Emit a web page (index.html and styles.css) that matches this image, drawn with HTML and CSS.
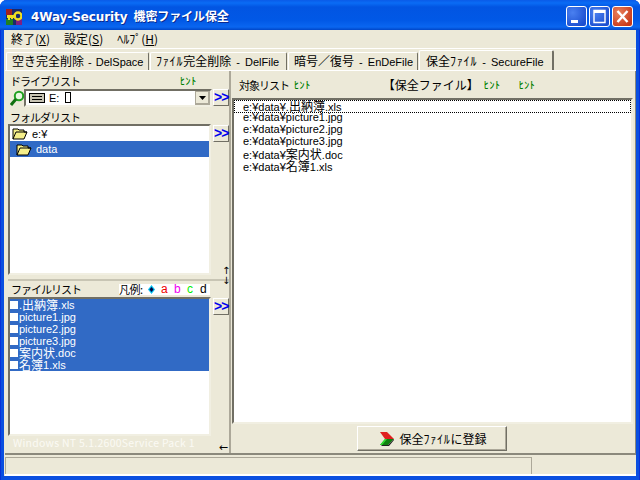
FILE: index.html
```html
<!DOCTYPE html>
<html lang="ja">
<head>
<meta charset="utf-8">
<title>4Way-Security</title>
<link rel="stylesheet" href="styles.css">
</head>
<body>
<div class="window">
  <header class="titlebar">
    <svg class="appicon" width="16" height="16" viewBox="0 0 16 16">
      <rect width="16" height="16" fill="#1a2a6a"/>
      <rect x="0" y="0" width="6" height="6" fill="#a02020"/>
      <rect x="0" y="10" width="7" height="6" fill="#208020"/>
      <rect x="10" y="10" width="6" height="6" fill="#802080"/>
      <rect x="1" y="6" width="9" height="3" fill="#f0e020"/>
      <circle cx="12" cy="7" r="3.500" fill="none" stroke="#f0e020" stroke-width="2.400"/>
      <rect x="2" y="8" width="2" height="3" fill="#f0e020"/>
      <rect x="5" y="8" width="2" height="2" fill="#f0e020"/>
    </svg>
    <span class="title">4Way-Security <span class="title-cj">機密ファイル保全</span></span>
    <div class="caption-buttons">
      <div class="capbtn"><svg width="19" height="19" viewBox="0 0 19 19"><rect x="4" y="13" width="7" height="3" fill="#fff"/></svg></div>
      <div class="capbtn"><svg width="19" height="19" viewBox="0 0 19 19"><path d="M4 3.500h11v12h-11z" fill="none" stroke="#fff" stroke-width="1.400"/><rect x="4" y="3" width="11" height="3" fill="#fff"/></svg></div>
      <div class="capbtn close"><svg width="19" height="19" viewBox="0 0 19 19"><path d="M4.500 4l10 11M14.500 4l-10 11" stroke="#fff" stroke-width="2.400"/></svg></div>
    </div>
  </header>
  <div class="client">
    <nav class="menu">
      <span>終了(<u>X</u>)</span><span>設定(<u>S</u>)</span><span>ﾍﾙﾌﾟ(<u>H</u>)</span>
    </nav>
    <div class="tabs">
      <div class="tab t1"><span class="cj">空き完全削除</span> - DelSpace</div>
      <div class="tab t2"><span class="hw">ﾌｧｲﾙ</span><span class="cj">完全削除</span> - DelFile</div>
      <div class="tab t3"><span class="cj">暗号／復号</span> - EnDeFile</div>
      <div class="tab active"><span class="cj">保全</span><span class="hw">ﾌｧｲﾙ</span> - SecureFile</div>
    </div>
    <main class="page">
      <section class="left">
        <div class="label-row drive-label"><span class="kana-label">ドライブリスト</span><span class="hint">ﾋﾝﾄ</span></div>
        <div class="drive-row">
          <svg class="lens" width="14" height="17" viewBox="0 0 14 17"><circle cx="9" cy="6" r="4.200" fill="#e8f8e0" stroke="#20a020" stroke-width="2"/><path d="M6 9l-5 6" stroke="#107010" stroke-width="3"/></svg>
          <div class="combo">
            <svg class="hdd" width="16" height="10" viewBox="0 0 16 10"><rect x=".5" y=".5" width="15" height="9" fill="#c8c4b4" stroke="#000"/><rect x="3" y="3" width="10" height="1" fill="#000"/><rect x="3" y="6" width="10" height="1" fill="#000"/></svg>
            <span class="combo-text">E: <span class="tofu"></span></span>
            <div class="combo-arrow"><svg width="7" height="4" viewBox="0 0 7 4"><path d="M0 0h7L3.500 4z" fill="#000"/></svg></div>
          </div>
          <div class="go">&gt;&gt;</div>
        </div>
        <div class="label-row folder-label"><span class="kana-label">フォルダリスト</span></div>
        <div class="list-row folder-row">
          <div class="listbox folders">
            <div class="folder">
              <svg width="16" height="13" viewBox="0 0 16 13"><path d="M1 2h5l1 1h5v2h3l-3 7H1z" fill="#f5ef8a" stroke="#000"/><path d="M1 12l3-7h11" fill="none" stroke="#000"/></svg>
              <span>e:¥</span>
            </div>
            <div class="folder sub selected">
              <svg width="16" height="13" viewBox="0 0 16 13"><path d="M1 2h5l1 1h5v2h3l-3 7H1z" fill="#f5ef8a" stroke="#000"/><path d="M1 12l3-7h11" fill="none" stroke="#000"/></svg>
              <span>data</span>
            </div>
          </div>
          <div class="go lower">&gt;&gt;</div>
        </div>
        <div class="splitter-row"><span class="updown">↑<br>↓</span></div>
        <div class="file-head">
          <span class="kana-label">ファイルリスト</span>
          <div class="legend"><span class="legend-title">凡例:</span><svg class="k-diamond" width="7" height="9" viewBox="0 0 7 9"><path d="M3.500 0l3.500 4.500-3.500 4.500-3.500-4.500z" fill="#00c0f0"/><path d="M3.500 2l2 2.500-2 2.500-2-2.500z" fill="#000040"/></svg><span class="k k-a">a</span><span class="k k-b">b</span><span class="k k-c">c</span><span class="k k-d">d</span></div>
        </div>
        <div class="list-row file-row">
          <div class="listbox files">
            <ul class="file-items">
              <li><i></i>.<span class="cj">出納簿</span>.xls</li>
              <li><i></i>picture1.jpg</li>
              <li><i></i>picture2.jpg</li>
              <li><i></i>picture3.jpg</li>
              <li><i></i><span class="cj">案内状</span>.doc</li>
              <li><i></i><span class="cj">名簿</span>1.xls</li>
            </ul>
          </div>
          <div class="go lower">&gt;&gt;</div>
        </div>
        <div class="os-row"><span class="os">Windows NT 5.1.2600Service Pack 1</span><span class="leftarrow">←</span></div>
      </section>
      <section class="right">
        <div class="right-head">
          <span class="rh-title kana-label">対象リスト</span><span class="hint">ﾋﾝﾄ</span>
          <span class="rh-secure">【保全ファイル】</span><span class="hint h2">ﾋﾝﾄ</span><span class="hint h3">ﾋﾝﾄ</span>
        </div>
        <div class="listbox targets">
          <ul class="target-items">
            <li class="focus">e:¥data¥.<span class="cj">出納簿</span>.xls</li>
            <li>e:¥data¥picture1.jpg</li>
            <li>e:¥data¥picture2.jpg</li>
            <li>e:¥data¥picture3.jpg</li>
            <li>e:¥data¥<span class="cj">案内状</span>.doc</li>
            <li>e:¥data¥<span class="cj">名簿</span>1.xls</li>
          </ul>
        </div>
        <div class="register-row">
          <button class="register">
            <svg width="16" height="16" viewBox="0 0 16 16"><path d="M1 1h7l7 7H6z" fill="#e02020"/><path d="M6 8h9l-6 6H1z" fill="#108010"/><path d="M1 14l5-6h2l-5 6z" fill="#30e030"/><path d="M9 14l6-6v1l-5 6H2l1-1z" fill="#222"/></svg>
            <span class="register-text">保全<span class="hw">ﾌｧｲﾙ</span>に登録</span>
          </button>
        </div>
      </section>
    </main>
    <footer class="status"><div class="st1"></div><div class="st2"></div></footer>
  </div>
</div>
</body>
</html>
```
FILE: styles.css
```css
* { box-sizing: border-box; }
html, body { margin: 0; padding: 0; width: 640px; height: 480px; overflow: hidden; }
body { font-family: "Liberation Sans", "Noto Sans CJK JP", sans-serif; font-size: 11px; line-height: 12px; color: #000; }
ul { list-style: none; margin: 0; padding: 0; }
.cj { font-family: "Noto Sans CJK JP", sans-serif; font-size: 12px; }
.hw { font-family: "Noto Sans CJK JP", sans-serif; font-size: 12px; letter-spacing: .8px; }
.kana-label { font-family: "Noto Sans CJK JP", sans-serif; font-size: 11px; letter-spacing: -1px; white-space: nowrap; }

.window { width: 640px; height: 480px; background: #0a4fe0; padding: 0 4px 4px; display: flex; flex-direction: column; border-radius: 7px 7px 0 0; box-shadow: inset 1px 0 #0831d9, inset -1px 0 #0831d9; }
.titlebar { height: 30px; margin: 0 -4px; padding: 0 7px 0 6px; display: flex; align-items: center; background: linear-gradient(#0a5be8 0, #0a6cf5 3px, #0255e2 7px, #0158e6 20px, #0a66f0 27px, #0046c8 30px); border-radius: 7px 7px 0 0; flex: none; }
.appicon { flex: none; margin-top: 3px; }
.title { margin-left: 9px; margin-top: 2px; color: #fff; font-family: "DejaVu Sans", sans-serif; font-weight: 700; font-size: 12px; letter-spacing: -.1px; text-shadow: 1px 1px #0a2a90; white-space: nowrap; }
.title-cj { font-family: "Noto Sans CJK JP", sans-serif; font-size: 12px; margin-left: 2px; }
.caption-buttons { margin-left: auto; margin-top: 3px; display: flex; gap: 2px; }
.capbtn { width: 21px; height: 21px; border: 1px solid #fff; border-radius: 3px; background: radial-gradient(circle at 30% 30%, #4a80f0, #1c4fd0 80%); }
.capbtn svg { display: block; margin: 0; }
.capbtn.close { background: radial-gradient(circle at 30% 30%, #e8805c, #c8391a 80%); }

.client { flex: 1; min-height: 0; background: #ece9d8; padding-left: 1px; display: flex; flex-direction: column; }
.menu { height: 19px; display: flex; align-items: center; padding-left: 6px; gap: 14px; border-bottom: 1px solid #fff; font-family: "Noto Sans CJK JP", sans-serif; font-size: 12px; flex: none; color: #000; }

.tabs { height: 21px; display: flex; flex: none; padding: 3px 0 0 1px; align-items: stretch; }
.tab { height: 18px; padding: 2px 0 0 5px; white-space: nowrap; border: 1px solid #fff; border-right: 1px solid #716f64; border-bottom: 0; border-radius: 2px 2px 0 0; font-size: 11px; word-spacing: 2px; margin-right: 1px; }
.t1 { width: 143px; word-spacing: 1px; }
.t2 { width: 137px; }
.t3 { width: 130px; }
.tab.active { width: 135px; height: 20px; margin-top: -2px; padding-top: 4px; padding-left: 6px; background: #ece9d8; border-right: 2px solid #716f64; margin-right: 0; }

.page { height: 385px; flex: none; display: flex; border-top: 1px solid #fff; border-bottom: 2px solid #8b897c; box-shadow: inset -1px 0 #8b897c; }
.left { width: 226px; flex: none; padding: 3px 0 0 3px; border-right: 2px solid #aca899; display: flex; flex-direction: column; }
.right { flex: 1; min-width: 0; padding-left: 1px; padding-right: 3px; display: flex; flex-direction: column; }

.label-row { display: flex; }
.drive-label { height: 15px; align-items: center; gap: 100px; padding-left: 2px; }
.hint { font-family: "Noto Sans CJK JP", sans-serif; font-size: 10px; font-weight: 500; color: #008000; letter-spacing: .6px; white-space: nowrap; }
.drive-row { height: 18px; display: flex; align-items: center; }
.lens { flex: none; margin-left: 2px; margin-top: 1px; }
.combo { width: 188px; height: 18px; background: #fff; border: 2px solid; border-color: #716f64 #f1efe2 #f1efe2 #716f64; display: flex; align-items: center; padding-left: 3px; }
.hdd { flex: none; }
.combo-text { margin-left: 4px; font-size: 11px; display: flex; align-items: center; }
.tofu { width: 6px; height: 11px; border: 1px solid #000; margin-left: 6px; }
.combo-arrow { margin-left: auto; width: 15px; height: 14px; background: #ece9d8; border: 1px solid #aca899; display: flex; align-items: center; justify-content: center; box-shadow: inset -1px -1px #aca899; }
.go { width: 16px; height: 17px; flex: none; margin-left: 1px; padding-left: 0; background: #ece9d8; border: 1px solid; border-color: #fff #716f64 #716f64 #fff; color: #0000ee; font: 700 14px/14px "Liberation Sans", sans-serif; letter-spacing: -1px; text-align: left; white-space: nowrap; }
.go.lower { margin-left: 2px; margin-top: 1px; }
.folder-label { height: 18px; align-items: flex-end; padding-left: 2px; padding-bottom: 1px; }

.list-row { display: flex; align-items: flex-start; }
.listbox { background: #fff; border: 2px solid; border-color: #716f64 #f1efe2 #f1efe2 #716f64; overflow: hidden; }
.folders, .files { width: 204px; }
.folders { height: 151px; }
.folder { height: 16px; display: flex; align-items: center; gap: 4px; padding-left: 2px; }
.folder:first-child { height: 15px; }
.folder.sub { padding-left: 6px; background: #316ac5; color: #fff; }
.folder svg { flex: none; }

.splitter-row { height: 6px; display: flex; justify-content: flex-end; border-bottom: 2px solid #c8c5b4; position: relative; }
.updown { position: absolute; right: -1px; top: -9px; font: 400 10px/10px "DejaVu Sans", sans-serif; width: 8px; text-align: center; }
.file-head { height: 16px; display: flex; align-items: center; justify-content: space-between; padding-left: 3px; padding-right: 19px; }
.legend { background: #fff; width: 91px; height: 11px; display: flex; align-items: center; font-size: 11px; }
.legend-title { font-family: "Noto Sans CJK JP", sans-serif; font-size: 11px; width: 29px; flex: none; white-space: nowrap; letter-spacing: -.5px; }
.k-diamond { flex: none; margin-right: 6px; }
.k { width: 7px; margin-right: 6px; flex: none; font-size: 12px; }
.k-a { color: #f00000; }
.k-b { color: #f000f0; }
.k-c { color: #00f000; }
.k-d { color: #000; }
.files { height: 139px; }
.file-items { background: #316ac5; color: #fff; }
.file-items li { height: 12px; line-height: 12px; display: flex; align-items: center; white-space: nowrap; }
.file-items i { width: 8px; height: 8px; background: #fff; margin-right: 1px; flex: none; }

.os-row { flex: 1; display: flex; align-items: flex-start; justify-content: space-between; padding-left: 5px; padding-right: 1px; }
.os { color: #fbfaf4; font-family: "Noto Sans CJK JP", sans-serif; font-size: 10.500px; letter-spacing: .25px; margin-top: 1px; }
.leftarrow { font: 400 11px/10px "DejaVu Sans", sans-serif; margin-top: 7px; }

.right-head { height: 27px; display: flex; align-items: center; padding-left: 7px; flex: none; }
.right-head .hint { margin-left: 5px; }
.rh-secure { margin-left: 72px; font-family: "Noto Sans CJK JP", sans-serif; font-size: 12px; }
.right-head .h2 { margin-left: 5px; }
.right-head .h3 { margin-left: 18px; }
.targets { height: 326px; flex: none; width: 401px; }
.target-items li { height: 12px; line-height: 11px; padding-left: 9px; white-space: nowrap; }
.target-items li.focus { height: 13px; outline: 1px dotted #000; outline-offset: -1px; margin-bottom: -1px; }
.register-row { flex: 1; display: flex; justify-content: center; align-items: flex-start; padding-top: 2px; padding-right: 1px; }
.register { width: 150px; height: 25px; background: #ece9d8; border: 1px solid; border-color: #fff #716f64 #716f64 #fff; font: inherit; display: flex; align-items: center; justify-content: center; gap: 4px; box-shadow: inset -1px -1px #aca899; padding: 0 0 0 2px; }
.register-text { font-family: "Noto Sans CJK JP", sans-serif; font-size: 12px; }

.status { flex: 1; display: flex; padding-top: 2px; min-height: 0; border-bottom: 2px solid #fff; }
.st1 { width: 527px; border-top: 1px solid #aca899; border-right: 1px solid #aca899; border-left: 1px solid #aca899; }
.st2 { flex: 1; }
```
